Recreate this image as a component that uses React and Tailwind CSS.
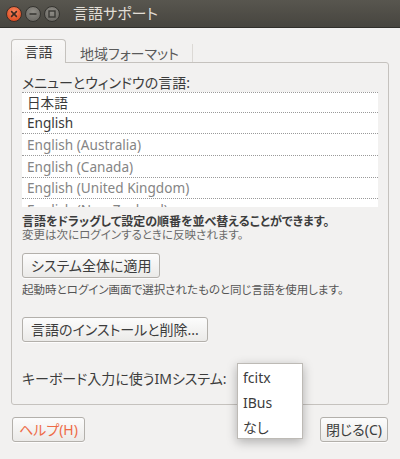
import React from 'react'

const langs = [
  { name: '日本語', h: 'h-[20px]', dark: true },
  { name: 'English', h: 'h-[21px]', dark: true },
  { name: 'English (Australia)', h: 'h-[22px]' },
  { name: 'English (Canada)', h: 'h-[22px]' },
  { name: 'English (United Kingdom)', h: 'h-[21px]' },
  { name: 'English (New Zealand)', h: 'h-[22px]' },
]

function WinButton({ kind }) {
  if (kind === 'close') {
    return (
      <svg width="16" height="16" viewBox="0 0 16 16">
        <defs>
          <radialGradient id="cg" cx="50%" cy="35%" r="65%">
            <stop offset="0" stopColor="#f7865f" />
            <stop offset="1" stopColor="#dd4a1f" />
          </radialGradient>
        </defs>
        <circle cx="8" cy="8" r="7.5" fill="url(#cg)" stroke="#3a2e28" strokeWidth="1" />
        <path d="M5.6 5.6 L10.4 10.4 M10.4 5.6 L5.6 10.4" stroke="#3c2a22" strokeWidth="1.6" strokeLinecap="round" />
      </svg>
    )
  }
  return (
    <svg width="16" height="16" viewBox="0 0 16 16">
      <defs>
        <radialGradient id={`g-${kind}`} cx="50%" cy="35%" r="65%">
          <stop offset="0" stopColor="#8f8d87" />
          <stop offset="1" stopColor="#6a6863" />
        </radialGradient>
      </defs>
      <circle cx="8" cy="8" r="7.5" fill={`url(#g-${kind})`} stroke="#34332f" strokeWidth="1" />
      {kind === 'min' ? (
        <path d="M4.5 8 H11.5" stroke="#3a3935" strokeWidth="1.6" />
      ) : (
        <rect x="5" y="5" width="6" height="6" fill="none" stroke="#3a3935" strokeWidth="1.4" />
      )}
    </svg>
  )
}

export default function App() {
  const btn =
    'h-[25px] rounded-[3px] border border-[#b3b0ab] bg-linear-to-b from-[#fcfcfc] to-[#ebeae8] shadow-[0_1px_0_rgba(255,255,255,0.8)] text-[14px] leading-none flex items-center'

  return (
    <div className='relative w-[400px] h-[459px] overflow-hidden bg-[#f2f1f0] text-[#3c3c3c] font-["Noto_Sans","Noto_Sans_CJK_JP",sans-serif] [font-feature-settings:"palt"]'>
      {/* title bar */}
      <div className="h-[28px] flex items-center pl-[6px] bg-linear-to-b from-[#58564f] to-[#47453f] border-b border-[#302f2b]">
        <div className="flex gap-[3px]">
          <WinButton kind="close" />
          <WinButton kind="min" />
          <WinButton kind="max" />
        </div>
        <div className="ml-[13px] text-[15px] text-[#e2ded6]">言語サポート</div>
      </div>

      <div className="px-[11px]">
        {/* tabs */}
        <div className="mt-[11px] -mb-px relative z-10 flex items-end h-[24px]">
          <div className="h-[24px] w-[55px] flex items-center justify-center border border-b-0 border-[#c5c2be] rounded-t-[4px] bg-linear-to-b from-[#f8f7f6] to-[#f2f1f0] text-[14px] text-[#3c3c3c]">
            言語
          </div>
          <div className="h-[18px] flex items-center pl-[14px] pr-[13px] border-r border-[#dcd9d5] text-[14px] text-[#5a5a5a] mb-px">
            地域フォーマット
          </div>
        </div>

        {/* panel */}
        <div className="h-[343px] border border-[#c5c2be] rounded-[3px] rounded-tl-none px-[10px]">
          <div className="mt-[12px] text-[14px] leading-[16px]">メニューとウィンドウの言語:</div>
          <div className="mt-px h-[115px] overflow-hidden bg-white">
            {langs.map((l) => (
              <div
                key={l.name}
                className={`${l.h} border-t border-dotted border-[#9a9a9a] pl-[5px] flex items-center text-[13.6px] leading-none ${
                  l.dark ? 'text-[#3a3a3a]' : 'text-[#858585]'
                }`}
              >
                {l.name}
              </div>
            ))}
          </div>

          <div className="mt-[8px] text-[12px] leading-[13px] font-bold text-[#3c3c3c]">
            言語をドラッグして設定の順番を並べ替えることができます。
          </div>
          <div className="text-[11.5px] leading-[13px] text-[#6a6a6a]">変更は次にログインするときに反映されます。</div>

          <button className={`${btn} px-[8px] mt-[12px]`}>システム全体に適用</button>

          <div className="mt-[5px] text-[11.5px] leading-[14px] text-[#555]">
            起動時とログイン画面で選択されたものと同じ言語を使用します。
          </div>

          <button className={`${btn} px-[8px] mt-[20px]`}>言語のインストールと削除...</button>

          <div className="mt-[26px] h-[20px] flex items-center text-[14px] text-[#3c3c3c]">
            キーボード入力に使うIMシステム:
          </div>
        </div>

        {/* bottom buttons */}
        <div className="mt-[12px] flex justify-between">
          <button className={`${btn} px-[6px] ml-px text-[#ee6b47]`}>ヘルプ(H)</button>
          <button className={`${btn} px-[5px] mr-px`}>閉じる(C)</button>
        </div>
      </div>

      {/* combo popup */}
      <div className="absolute left-[237px] top-[363px] w-[66px] h-[76px] bg-white border border-[#bdbab5] shadow-[0_3px_10px_rgba(0,0,0,0.28)] pt-px">
        {['fcitx', 'IBus', 'なし'].map((t) => (
          <div key={t} className="h-[25px] pl-[5px] flex items-center text-[14px] text-[#3c3c3c]">
            {t}
          </div>
        ))}
      </div>
    </div>
  )
}
